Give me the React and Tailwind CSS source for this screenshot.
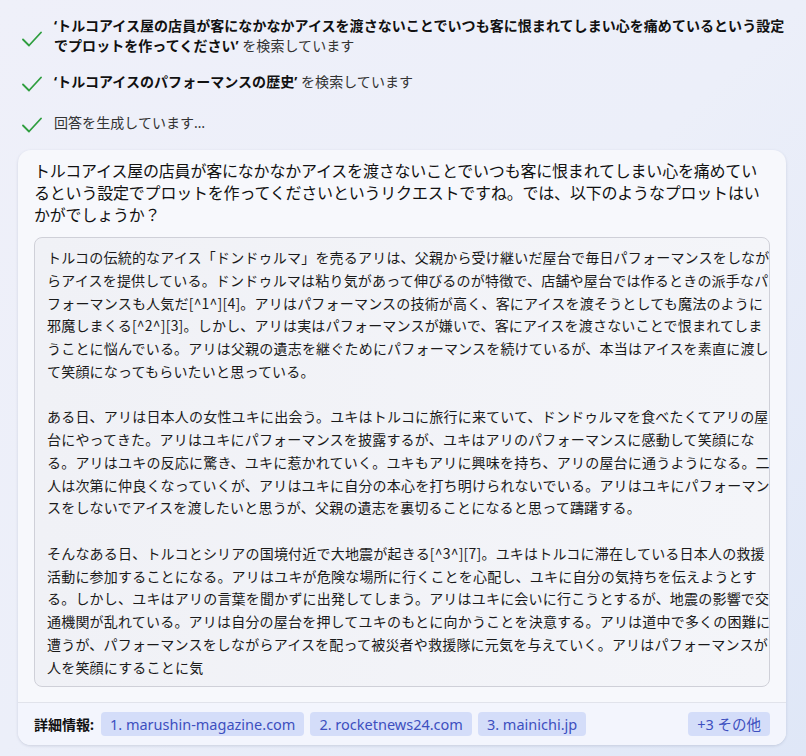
const steps = [
  {
    lines: [
      [["‘トルコアイス屋の店員が客になかなかアイスを渡さないことでいつも客に恨まれてしまい心を痛めているという設定", true]],
      [["でプロットを作ってください’", true], [" を検索しています", false]],
    ],
  },
  {
    lines: [[["‘トルコアイスのパフォーマンスの歴史’", true], [" を検索しています", false]]],
  },
  { lines: [[["回答を生成しています…", false]]] },
];

const intro = [
  "トルコアイス屋の店員が客になかなかアイスを渡さないことでいつも客に恨まれてしまい心を痛めてい",
  "るという設定でプロットを作ってくださいというリクエストですね。では、以下のようなプロットはい",
  "かがでしょうか？",
];

const plot = [
  "トルコの伝統的なアイス「ドンドゥルマ」を売るアリは、父親から受け継いだ屋台で毎日パフォーマンスをしなが",
  "らアイスを提供している。ドンドゥルマは粘り気があって伸びるのが特徴で、店舗や屋台では作るときの派手なパ",
  "フォーマンスも人気だ[^1^][4]。アリはパフォーマンスの技術が高く、客にアイスを渡そうとしても魔法のように",
  "邪魔しまくる[^2^][3]。しかし、アリは実はパフォーマンスが嫌いで、客にアイスを渡さないことで恨まれてしま",
  "うことに悩んでいる。アリは父親の遺志を継ぐためにパフォーマンスを続けているが、本当はアイスを素直に渡し",
  "て笑顔になってもらいたいと思っている。",
  "",
  "ある日、アリは日本人の女性ユキに出会う。ユキはトルコに旅行に来ていて、ドンドゥルマを食べたくてアリの屋",
  "台にやってきた。アリはユキにパフォーマンスを披露するが、ユキはアリのパフォーマンスに感動して笑顔にな",
  "る。アリはユキの反応に驚き、ユキに惹かれていく。ユキもアリに興味を持ち、アリの屋台に通うようになる。二",
  "人は次第に仲良くなっていくが、アリはユキに自分の本心を打ち明けられないでいる。アリはユキにパフォーマン",
  "スをしないでアイスを渡したいと思うが、父親の遺志を裏切ることになると思って躊躇する。",
  "",
  "そんなある日、トルコとシリアの国境付近で大地震が起きる[^3^][7]。ユキはトルコに滞在している日本人の救援",
  "活動に参加することになる。アリはユキが危険な場所に行くことを心配し、ユキに自分の気持ちを伝えようとす",
  "る。しかし、ユキはアリの言葉を聞かずに出発してしまう。アリはユキに会いに行こうとするが、地震の影響で交",
  "通機関が乱れている。アリは自分の屋台を押してユキのもとに向かうことを決意する。アリは道中で多くの困難に",
  "遭うが、パフォーマンスをしながらアイスを配って被災者や救援隊に元気を与えていく。アリはパフォーマンスが",
  "人を笑顔にすることに気",
];

const sources = ["1. marushin-magazine.com", "2. rocketnews24.com", "3. mainichi.jp"];

function Check() {
  return (
    <svg width="20" height="16" viewBox="0 0 20 16" fill="none" className="mt-[5px] shrink-0">
      <path d="M1 8.5 L7 14.5 L19 1.5" stroke="#2f9e3f" strokeWidth="1.8" strokeLinecap="round" strokeLinejoin="round" />
    </svg>
  );
}

export default function App() {
  return (
    <div className="min-h-[756px] w-[806px] overflow-hidden bg-gradient-to-br from-[#eff0f9] via-[#eceff9] to-[#dfe7f7] font-['Noto_Sans','Noto_Sans_CJK_JP',sans-serif] text-[#1b1b1b]">
      <div className="flex flex-col pl-[22px] pt-[16px]">
        {steps.map((step, i) => (
          <div
            key={i}
            className={`flex items-center gap-[12px] ${i === 1 ? "mt-[15px]" : i === 2 ? "mt-[20px]" : ""}`}
          >
            <Check />
            <div className="text-[14px] leading-[20px] tracking-[0.05px]">
              {step.lines.map((line, j) => (
                <div key={j} className="whitespace-nowrap">
                  {line.map(([text, bold], k) => (
                    <span key={k} className={bold ? "font-bold text-[#111]" : "text-[#333]"}>
                      {text}
                    </span>
                  ))}
                </div>
              ))}
            </div>
          </div>
        ))}
      </div>

      <div className="ml-[18px] mt-[17px] w-[768px] overflow-hidden rounded-[13px] bg-[#f7f8fc] shadow-[0_1px_3px_rgba(60,70,110,0.18)]">
        <div className="px-[16px] pt-[10px]">
          <div className="text-[16px] leading-[22px] tracking-[-0.2px] text-[#111]">
            {intro.map((line, i) => (
              <div key={i} className="whitespace-nowrap">{line}</div>
            ))}
          </div>

          <div className="mt-[11px] h-[450px] overflow-hidden rounded-[8px] border border-[#cfd0d8] bg-gradient-to-r from-[#f0f1f6] to-[#f4f5f9] px-[12px] py-[8px] font-['Noto_Sans_CJK_JP',sans-serif] text-[14px] leading-[22.75px] tracking-[0.2px] text-[#1a1a1a]">
            {plot.map((line, i) => (
              <div key={i} className="h-[22.75px] whitespace-nowrap">{line}</div>
            ))}
          </div>
        </div>

        <div className="mt-[15px] border-t border-[#e1e3eb] bg-[#f3f5fd] px-[16px] pb-[9px] pt-[9px]">
          <div className="flex items-center gap-[6px] text-[14.5px]">
            <span className="mr-[1px] text-[14px] font-bold text-[#111]">詳細情報:</span>
            {sources.map((s) => (
              <span key={s} className="rounded-[4px] bg-[#d4ddf9] px-[9px] py-[1px] leading-[22px] text-[#3d4fbf]">
                {s}
              </span>
            ))}
            <span className="ml-auto rounded-[4px] bg-[#d4ddf9] px-[9px] py-[1px] leading-[22px] text-[#3d4fbf]">
              +3 その他
            </span>
          </div>
        </div>
      </div>
    </div>
  );
}
